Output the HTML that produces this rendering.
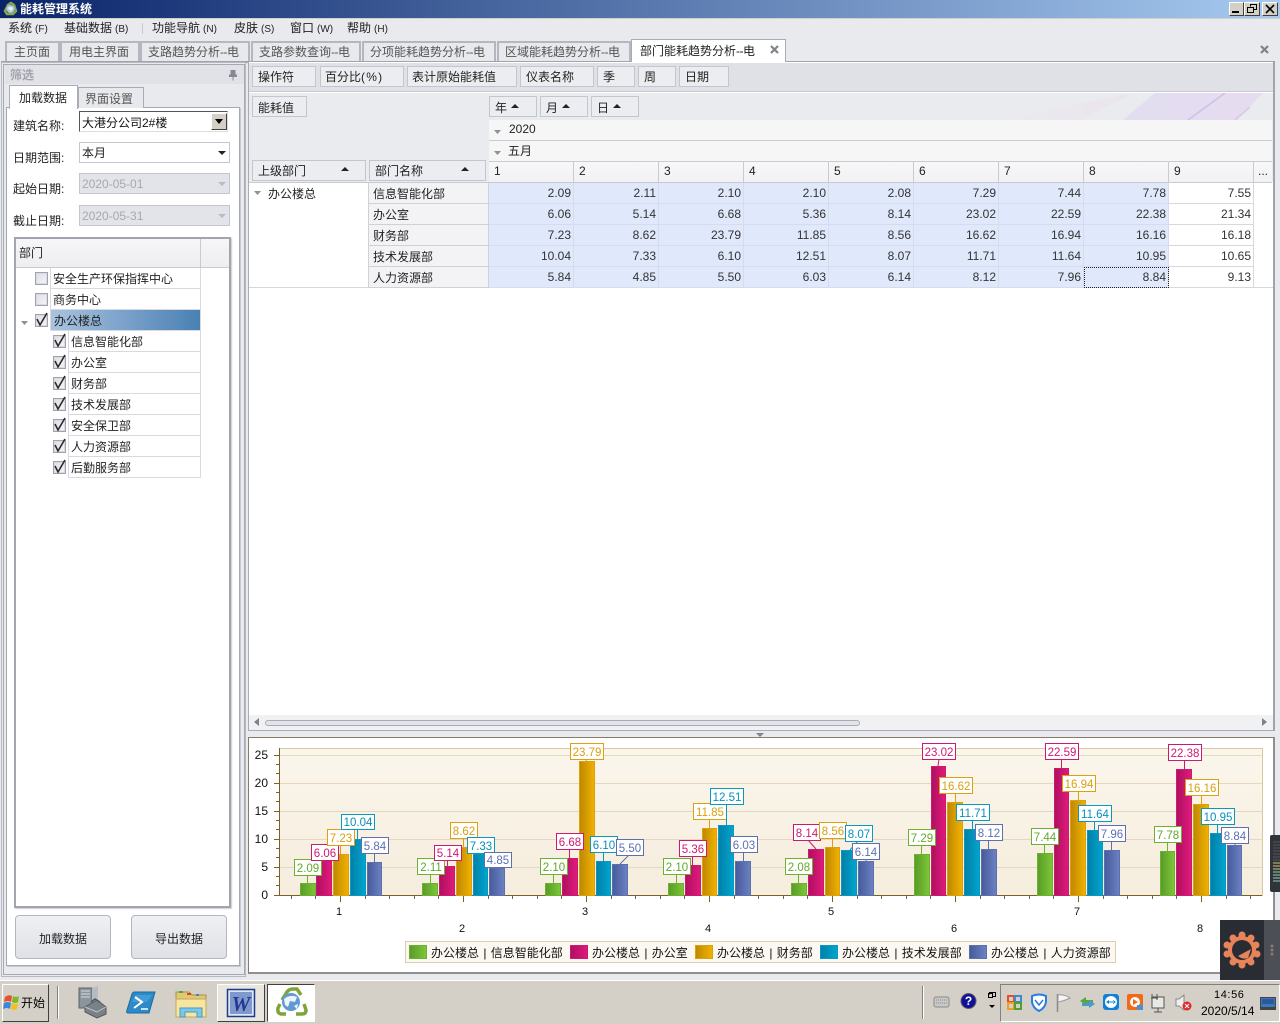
<!DOCTYPE html>
<html lang="zh"><head><meta charset="utf-8"><title>能耗管理系统</title>
<style>
html,body{margin:0;padding:0;width:1280px;height:1024px;overflow:hidden;background:#e9eaee}
body{font:12px/16px "Liberation Sans","WenQuanYi Zen Hei","Noto Sans CJK SC",sans-serif;color:#222;position:relative}
div{position:absolute;box-sizing:border-box}
.t{white-space:nowrap;height:16px}
.z{font-size:10px;margin-left:3px}
.tab{top:41px;height:21px;background:#e8e9ed;border:2px solid #b4b6c0;border-bottom:0;border-left-width:2px;color:#555;padding:1px 0 0 6px;white-space:nowrap}
.tab span{letter-spacing:-.5px}
.btn{background:#ecedf1;border:1px solid #c3c5cf;padding:2px 0 0 5px;white-space:nowrap;height:21px}
.nm{left:369px;width:120px;height:21px;background:#f3f3f5;border-bottom:1px solid #cfd0d8;border-right:1px solid #cfd0d8;padding:3px 0 0 4px;white-space:nowrap}
.c{height:21px;width:85px;background:#e0e8fb;border-bottom:1px solid #d5dcee;border-right:1px solid #d5dcee;text-align:right;padding:2px 2px 0 0;color:#333}
.w{background:#fff;border-bottom:1px solid #d8d9e0;border-right:1px solid #d8d9e0}
.h{top:162px;height:20px;width:85px;background:linear-gradient(#f7f7f8,#f2f2f4);border-right:1px solid #c9cad2;padding:1px 0 0 5px}
.lab{left:13px;color:#222}
.tr{background:#fff;border-bottom:1px solid #d8dae2;border-right:1px solid #d8dae2;border-left:1px solid #d8dae2;height:21px;padding:3px 0 0 2px;white-space:nowrap}
.ck{width:13px;height:13px;background:linear-gradient(135deg,#dcdde4,#f6f6f9);border:1px solid #a0a2ae;box-shadow:inset 0 0 0 1px #d9dae2}
svg text{font-family:"Liberation Sans","WenQuanYi Zen Hei",sans-serif}
.g rect{stroke:#6eb030}.g text{fill:#62a828}.g line{stroke:#6eb030}
.m rect{stroke:#cc1a70}.m text{fill:#cc1a70}.m line{stroke:#cc1a70}
.o rect{stroke:#dca010}.o text{fill:#d8a010}.o line{stroke:#dca010}
.b rect{stroke:#0898c0}.b text{fill:#0890b8}.b line{stroke:#0898c0}
.p rect{stroke:#5c70b0}.p text{fill:#5c70b0}.p line{stroke:#5c70b0}
.l rect{fill:#fff}.l text{font-size:11.5px;text-anchor:middle}
.bg rect{fill:url(#gg);stroke:#6eb030}.bm rect{fill:url(#gm);stroke:#cc1a70}.bo rect{fill:url(#go);stroke:#dca010}.bb rect{fill:url(#gb);stroke:#0898c0}.bp rect{fill:url(#gp);stroke:#5c70b0}
</style></head><body>

<div style="left:0;top:0;width:1280px;height:18px;background:linear-gradient(90deg,#0a246a,#a6caf0)"></div>
<div style="left:0;top:18px;width:1280px;height:1px;background:#d4d0c8"></div>
<div class="t" style="left:20px;top:1px;color:#fff;font-weight:bold">能耗管理系统</div>
<svg style="position:absolute;left:3px;top:1px" width="15" height="15" viewBox="0 0 15 15"><path d="M2 10L5 4 8 2 11 4 13 10 10 13H4Z" fill="none" stroke="#8aa84a" stroke-width="2.500"/><circle cx="7.500" cy="8" r="4" fill="#a8cbe8"/><path d="M5 7Q7 5 10 7L8 10Z" fill="#eef4fa"/></svg>
<div style="left:1229px;top:2px;width:15px;height:14px;background:#d4d0c8;border:1px solid;border-color:#fff #404040 #404040 #fff"></div>
<div style="left:1232px;top:11px;width:7px;height:2px;background:#000"></div>
<div style="left:1244px;top:2px;width:16px;height:14px;background:#d4d0c8;border:1px solid;border-color:#fff #404040 #404040 #fff"></div>
<svg style="position:absolute;left:1247px;top:4px" width="10" height="10"><path d="M3.500 2.500V.5H9.500V5.500H7M.5 3.500H6.500V8.500H.5Z" fill="none" stroke="#000"/></svg>
<div style="left:1262px;top:2px;width:16px;height:14px;background:#d4d0c8;border:1px solid;border-color:#fff #404040 #404040 #fff"></div>
<svg style="position:absolute;left:1265px;top:4px" width="10" height="10"><path d="M1 1L9 9M9 1L1 9" stroke="#000" stroke-width="1.600"/></svg>

<div class="t" style="left:8px;top:20px">系统<span class="z">(F)</span></div>
<div class="t" style="left:64px;top:20px">基础数据<span class="z">(B)</span></div>
<div style="left:142px;top:23px;width:1px;height:11px;background:#c8c9d2"></div>
<div class="t" style="left:152px;top:20px">功能导航<span class="z">(N)</span></div>
<div class="t" style="left:234px;top:20px">皮肤<span class="z">(S)</span></div>
<div class="t" style="left:290px;top:20px">窗口<span class="z">(W)</span></div>
<div class="t" style="left:347px;top:20px">帮助<span class="z">(H)</span></div>

<div class="tab" style="left:5px;width:55px;padding-left:7px">主页面</div>
<div class="tab" style="left:60px;width:80px;padding-left:7px">用电主界面</div>
<div class="tab" style="left:140px;width:110px">支路趋势分析<span>--</span>电</div>
<div class="tab" style="left:251px;width:110px">支路参数查询<span>--</span>电</div>
<div class="tab" style="left:362px;width:134px">分项能耗趋势分析<span>--</span>电</div>
<div class="tab" style="left:497px;width:134px">区域能耗趋势分析<span>--</span>电</div>
<div style="left:1px;top:61px;width:1274px;height:2px;background:#a0a2ad"></div>
<div class="tab" style="left:631px;top:39px;width:155px;height:24px;background:#fff;color:#222;padding:3px 0 0 8px;border-width:1px;border-bottom:0;border-color:#a9abb6">部门能耗趋势分析<span>--</span>电</div>
<svg style="position:absolute;left:769px;top:45px" width="11" height="9"><path d="M2 1L9 8M9 1L2 8" stroke="#7f818c" stroke-width="2.200"/></svg>
<svg style="position:absolute;left:1259px;top:45px" width="11" height="9"><path d="M2 1L9 8M9 1L2 8" stroke="#7f818c" stroke-width="2.200"/></svg>

<!-- left panel -->
<div style="left:1px;top:62px;width:245px;height:915px;border:1px solid #b7b9c3;background:#e9eaee"></div>
<div style="left:3px;top:64px;width:242px;height:911px;border:1px solid #a6a8b3;background:#e9eaee"></div>
<div style="left:5px;top:65px;width:239px;height:19px;background:#e1e2e7"></div>
<div class="t" style="left:10px;top:67px;color:#a2a4ae;font-weight:bold">筛选</div>
<svg style="position:absolute;left:229px;top:70px" width="8" height="11"><path d="M2 .5H6V5H7.500V6.500H.5V5H2ZM4 6.500V10.500" fill="#868894" stroke="#868894"/></svg>
<div style="left:6px;top:107px;width:234px;height:859px;background:#fff;border:1px solid #a6a8b3;box-shadow:1px 1px 0 #c7c8d0"></div>
<div style="left:78px;top:87px;width:66px;height:21px;background:#e8e9ed;border:1px solid #a9abb6;border-bottom:0;padding:3px 0 0 6px;color:#555">界面设置</div>
<div style="left:9px;top:85px;width:69px;height:24px;background:#fff;border:1px solid #a9abb6;border-bottom:0;padding:4px 0 0 9px">加载数据</div>

<div class="t lab" style="top:118px">建筑名称:</div>
<div class="t lab" style="top:150px">日期范围:</div>
<div class="t lab" style="top:181px">起始日期:</div>
<div class="t lab" style="top:213px">截止日期:</div>

<div style="left:79px;top:111px;width:149px;height:21px;background:#fff;border:1px solid;border-color:#555 #ddd #ddd #555;padding:3px 0 0 2px;color:#111">大港分公司2#楼</div>
<div style="left:211px;top:113px;width:16px;height:17px;background:#d4d0c8;border:1px solid;border-color:#fff #404040 #404040 #fff"></div>
<svg style="position:absolute;left:215px;top:119px" width="8" height="5"><path d="M0 0H8L4 5Z" fill="#000"/></svg>

<div style="left:79px;top:142px;width:151px;height:21px;background:#fff;border:1px solid #c3c5cf;padding:2px 0 0 2px">本月</div>
<svg style="position:absolute;left:218px;top:151px" width="8" height="4"><path d="M0 0H8L4 4Z" fill="#222"/></svg>
<div style="left:79px;top:173px;width:151px;height:21px;background:#e3e4e9;border:1px solid #c3c5cf;padding:2px 0 0 2px;color:#a6a8b2">2020-05-01</div>
<svg style="position:absolute;left:218px;top:182px" width="8" height="4"><path d="M0 0H8L4 4Z" fill="#b9bbc4"/></svg>
<div style="left:79px;top:205px;width:151px;height:21px;background:#e3e4e9;border:1px solid #c3c5cf;padding:2px 0 0 2px;color:#a6a8b2">2020-05-31</div>
<svg style="position:absolute;left:218px;top:214px" width="8" height="4"><path d="M0 0H8L4 4Z" fill="#b9bbc4"/></svg>

<!-- tree -->
<div style="left:14px;top:237px;width:217px;height:671px;background:#fff;border:2px solid #a2a4af;box-shadow:1px 1px 1px #ccc"></div>
<div style="left:16px;top:239px;width:213px;height:29px;background:linear-gradient(#f6f6f8,#eeeef1);border-bottom:1px solid #c9cad2;padding:6px 0 0 3px">部门</div>
<div style="left:200px;top:239px;width:1px;height:29px;background:#c9cad2"></div>
<div class="tr" style="left:50px;top:268px;width:151px">安全生产环保指挥中心</div>
<div class="tr" style="left:50px;top:289px;width:151px">商务中心</div>
<div class="tr" style="left:50px;top:310px;width:151px;background:linear-gradient(90deg,#a9c3de,#4a80b4);border-color:#d8dae2;padding-left:3px">办公楼总</div>
<div class="tr" style="left:68px;top:331px;width:133px">信息智能化部</div>
<div class="tr" style="left:68px;top:352px;width:133px">办公室</div>
<div class="tr" style="left:68px;top:373px;width:133px">财务部</div>
<div class="tr" style="left:68px;top:394px;width:133px">技术发展部</div>
<div class="tr" style="left:68px;top:415px;width:133px">安全保卫部</div>
<div class="tr" style="left:68px;top:436px;width:133px">人力资源部</div>
<div class="tr" style="left:68px;top:457px;width:133px">后勤服务部</div>
<div class="ck" style="left:35px;top:272px"></div>
<div class="ck" style="left:35px;top:293px"></div>
<div class="ck" style="left:35px;top:314px"></div>
<div class="ck" style="left:53px;top:335px"></div>
<div class="ck" style="left:53px;top:356px"></div>
<div class="ck" style="left:53px;top:377px"></div>
<div class="ck" style="left:53px;top:398px"></div>
<div class="ck" style="left:53px;top:419px"></div>
<div class="ck" style="left:53px;top:440px"></div>
<div class="ck" style="left:53px;top:461px"></div>
<svg style="position:absolute;left:0;top:0;pointer-events:none" width="80" height="480">
<path d="M21 321H28L24.500 325Z" fill="#8d8f9a"/>
<g fill="none" stroke="#2a2a2a" stroke-width="1.600">
<path d="M37 319L40 325 47 313"/><path d="M55 340L58 346 65 334"/><path d="M55 361L58 367 65 355"/><path d="M55 382L58 388 65 376"/><path d="M55 403L58 409 65 397"/><path d="M55 424L58 430 65 418"/><path d="M55 445L58 451 65 439"/><path d="M55 466L58 472 65 460"/>
</g></svg>

<div style="left:15px;top:915px;width:96px;height:44px;border:1px solid #b4b6c1;border-radius:4px;background:linear-gradient(#eff0f3,#dfe1e6);text-align:center;padding-top:15px">加载数据</div>
<div style="left:131px;top:915px;width:96px;height:44px;border:1px solid #b4b6c1;border-radius:4px;background:linear-gradient(#eff0f3,#dfe1e6);text-align:center;padding-top:15px">导出数据</div>

<!-- right: pivot -->
<div style="left:248px;top:62px;width:1027px;height:669px;background:#fff;border-left:1px solid #a9abb6;border-right:2px solid #a0a2ad;border-bottom:1px solid #a9abb6"></div>
<div style="left:249px;top:63px;width:1024px;height:29px;background:#e0e1e6;border-bottom:1px solid #c8c9d2"></div>
<div style="left:249px;top:93px;width:1024px;height:89px;background:#eaebef"></div>
<svg style="position:absolute;left:1000px;top:93px" width="273" height="27"><defs><linearGradient id="pf" x1="0" x2="1" y1="0" y2="0"><stop offset="0" stop-color="#eaebef"/><stop offset="1" stop-color="#ebe4ec"/></linearGradient><linearGradient id="pl" x1="0" x2="1" y1="0" y2="0"><stop offset="0" stop-color="#e2ddf0"/><stop offset="1" stop-color="#e6dcf0"/></linearGradient></defs><path d="M5 27L120 2H130L80 27Z" fill="url(#pf)"/><path d="M123 27L155 0H263L237 27Z" fill="url(#pl)"/><path d="M188 27L225 0" stroke="#cfc0e6" stroke-width="1.500" fill="none"/><path d="M235 27L250 14" stroke="#d6c8ea" stroke-width="1.500" fill="none"/></svg>
<div class="btn" style="left:252px;top:66px;width:64px">操作符</div>
<div class="btn" style="left:320px;top:66px;width:84px;padding-left:4px">百分比<span style="letter-spacing:1.200px">(%)</span></div>
<div class="btn" style="left:407px;top:66px;width:110px;padding-left:4px">表计原始能耗值</div>
<div class="btn" style="left:520px;top:66px;width:74px">仪表名称</div>
<div class="btn" style="left:597px;top:66px;width:38px">季</div>
<div class="btn" style="left:638px;top:66px;width:38px">周</div>
<div class="btn" style="left:679px;top:66px;width:50px">日期</div>
<div class="btn" style="left:252px;top:96px;width:55px;padding-top:3px">能耗值</div>
<div class="btn" style="left:489px;top:96px;width:48px;padding-top:3px">年</div><svg style="position:absolute;left:511px;top:104px" width="8" height="4"><path d="M4 0L8 4H0Z" fill="#222"/></svg>
<div class="btn" style="left:540px;top:96px;width:48px;padding-top:3px">月</div><svg style="position:absolute;left:562px;top:104px" width="8" height="4"><path d="M4 0L8 4H0Z" fill="#222"/></svg>
<div class="btn" style="left:591px;top:96px;width:48px;padding-top:3px">日</div><svg style="position:absolute;left:613px;top:104px" width="8" height="4"><path d="M4 0L8 4H0Z" fill="#222"/></svg>
<div class="btn" style="left:252px;top:160px;width:114px">上级部门</div><svg style="position:absolute;left:341px;top:167px" width="8" height="4"><path d="M4 0L8 4H0Z" fill="#222"/></svg>
<div class="btn" style="left:369px;top:160px;width:117px">部门名称</div><svg style="position:absolute;left:461px;top:167px" width="8" height="4"><path d="M4 0L8 4H0Z" fill="#222"/></svg>

<div style="left:489px;top:120px;width:783px;height:21px;background:#f6f6f7;border-bottom:1px solid #c9cad2;padding:1px 0 0 20px">2020</div>
<div style="left:489px;top:141px;width:783px;height:21px;background:#f6f6f7;border-bottom:1px solid #c9cad2;padding:2px 0 0 19px">五月</div>
<svg style="position:absolute;left:490px;top:128px" width="16" height="28"><path d="M4 2H11L7.500 6ZM4 23H11L7.500 27Z" fill="#8d8f9a"/></svg>
<div style="left:489px;top:182px;width:783px;height:1px;background:#c9cad2"></div>
<div style="left:249px;top:182px;width:240px;height:1px;background:#c9cad2"></div>
<div class="h" style="left:489px;width:85px">1</div><div class="h" style="left:574px">2</div><div class="h" style="left:659px">3</div><div class="h" style="left:744px">4</div><div class="h" style="left:829px">5</div><div class="h" style="left:914px">6</div><div class="h" style="left:999px">7</div><div class="h" style="left:1084px">8</div><div class="h" style="left:1169px">9</div>
<div class="h" style="left:1254px;width:18px;padding-left:4px;border-right:0">...</div>

<svg style="position:absolute;left:253px;top:190px" width="10" height="6"><path d="M1 1H8L4.500 5Z" fill="#8d8f9a"/></svg>
<div class="t" style="left:268px;top:186px">办公楼总</div>
<div style="left:249px;top:287px;width:1024px;height:1px;background:#d5d6de"></div>
<div style="left:368px;top:183px;width:1px;height:105px;background:#cfd0d8"></div>

<div class="nm" style="top:183px">信息智能化部</div><div class="nm" style="top:204px">办公室</div><div class="nm" style="top:225px">财务部</div><div class="nm" style="top:246px">技术发展部</div><div class="nm" style="top:267px">人力资源部</div>

<div class="c" style="left:489px;top:183px">2.09</div><div class="c" style="left:574px;top:183px">2.11</div><div class="c" style="left:659px;top:183px">2.10</div><div class="c" style="left:744px;top:183px">2.10</div><div class="c" style="left:829px;top:183px">2.08</div><div class="c" style="left:914px;top:183px">7.29</div><div class="c" style="left:999px;top:183px">7.44</div><div class="c" style="left:1084px;top:183px">7.78</div><div class="c w" style="left:1169px;top:183px">7.55</div>
<div class="c" style="left:489px;top:204px">6.06</div><div class="c" style="left:574px;top:204px">5.14</div><div class="c" style="left:659px;top:204px">6.68</div><div class="c" style="left:744px;top:204px">5.36</div><div class="c" style="left:829px;top:204px">8.14</div><div class="c" style="left:914px;top:204px">23.02</div><div class="c" style="left:999px;top:204px">22.59</div><div class="c" style="left:1084px;top:204px">22.38</div><div class="c w" style="left:1169px;top:204px">21.34</div>
<div class="c" style="left:489px;top:225px">7.23</div><div class="c" style="left:574px;top:225px">8.62</div><div class="c" style="left:659px;top:225px">23.79</div><div class="c" style="left:744px;top:225px">11.85</div><div class="c" style="left:829px;top:225px">8.56</div><div class="c" style="left:914px;top:225px">16.62</div><div class="c" style="left:999px;top:225px">16.94</div><div class="c" style="left:1084px;top:225px">16.16</div><div class="c w" style="left:1169px;top:225px">16.18</div>
<div class="c" style="left:489px;top:246px">10.04</div><div class="c" style="left:574px;top:246px">7.33</div><div class="c" style="left:659px;top:246px">6.10</div><div class="c" style="left:744px;top:246px">12.51</div><div class="c" style="left:829px;top:246px">8.07</div><div class="c" style="left:914px;top:246px">11.71</div><div class="c" style="left:999px;top:246px">11.64</div><div class="c" style="left:1084px;top:246px">10.95</div><div class="c w" style="left:1169px;top:246px">10.65</div>
<div class="c" style="left:489px;top:267px">5.84</div><div class="c" style="left:574px;top:267px">4.85</div><div class="c" style="left:659px;top:267px">5.50</div><div class="c" style="left:744px;top:267px">6.03</div><div class="c" style="left:829px;top:267px">6.14</div><div class="c" style="left:914px;top:267px">8.12</div><div class="c" style="left:999px;top:267px">7.96</div><div class="c" style="left:1084px;top:267px;outline:1px dotted #222;outline-offset:-1px">8.84</div><div class="c w" style="left:1169px;top:267px">9.13</div>

<!-- scrollbar -->
<div style="left:249px;top:715px;width:1024px;height:15px;background:#f1f1f4"></div>
<svg style="position:absolute;left:254px;top:718px" width="6" height="8"><path d="M5 0V8L0 4Z" fill="#7f818c"/></svg>
<svg style="position:absolute;left:1262px;top:718px" width="6" height="8"><path d="M0 0V8L5 4Z" fill="#7f818c"/></svg>
<div style="left:265px;top:720px;width:595px;height:6px;border-radius:3px;background:#e3e4e9;border:1px solid #a9abb6"></div>
<svg style="position:absolute;left:756px;top:733px" width="8" height="4"><path d="M0 0H8L4 4Z" fill="#7f818c"/></svg>

<!-- chart panel -->
<div style="left:248px;top:737px;width:1027px;height:237px;background:#fff;border:1px solid #8a7a68;border-right:2px solid #8f8f92;border-bottom:2px solid #8f8f92"></div>

<svg style="position:absolute;left:0;top:0" width="1280" height="1024">
<defs>
<linearGradient id="bgp" x1="0" y1="0" x2="0" y2="1"><stop offset="0" stop-color="#fbf6ec"/><stop offset="1" stop-color="#f5eddd"/></linearGradient>
<linearGradient id="gg"><stop offset="0" stop-color="#5a9a28"/><stop offset="1" stop-color="#7cc838"/></linearGradient>
<linearGradient id="gm"><stop offset="0" stop-color="#ae1060"/><stop offset="1" stop-color="#e01a7c"/></linearGradient>
<linearGradient id="go"><stop offset="0" stop-color="#bd8800"/><stop offset="1" stop-color="#f2b200"/></linearGradient>
<linearGradient id="gb"><stop offset="0" stop-color="#007fa8"/><stop offset="1" stop-color="#00a6cf"/></linearGradient>
<linearGradient id="gp"><stop offset="0" stop-color="#465a9c"/><stop offset="1" stop-color="#6c82c2"/></linearGradient>
</defs>
<rect x="279.500" y="748.500" width="983" height="147" fill="url(#bgp)" stroke="#d8c9a0"/>
<g stroke="#e4d9bf"><path d="M280 755.500H1262M280 783.500H1262M280 811.500H1262M280 839.500H1262M280 867.500H1262"/></g>
<g stroke="#7d5f28" fill="none">
<path d="M279.500 748V896M275 895.500H1262"/>
<path d="M274 755.500H280M274 783.500H280M274 811.500H280M274 839.500H280M274 867.500H280M274 895.500H280"/>
<path d="M276 764.500H280M276 773.500H280M276 792.500H280M276 801.500H280M276 820.500H280M276 829.500H280M276 848.500H280M276 857.500H280M276 876.500H280M276 885.500H280"/>
<path d="M340.500 895V902M463.500 895V902M586.500 895V902M709.500 895V902M832.500 895V902M955.500 895V902M1078.500 895V902M1201.500 895V902"/>
<path d="M291.500 895V899M315.500 895V899M365.500 895V899M389.500 895V899M414.500 895V899M438.500 895V899M488.500 895V899M512.500 895V899M537.500 895V899M561.500 895V899M611.500 895V899M635.500 895V899M660.500 895V899M684.500 895V899M734.500 895V899M758.500 895V899M783.500 895V899M807.500 895V899M857.500 895V899M881.500 895V899M906.500 895V899M930.500 895V899M980.500 895V899M1004.500 895V899M1029.500 895V899M1053.500 895V899M1103.500 895V899M1127.500 895V899M1152.500 895V899M1176.500 895V899M1226.500 895V899M1250.500 895V899"/>
</g>
<g font-size="12" fill="#111" text-anchor="end">
<text x="268" y="759">25</text><text x="268" y="787">20</text><text x="268" y="815">15</text><text x="268" y="843">10</text><text x="268" y="871">5</text><text x="268" y="899">0</text>
</g>
<g font-size="11" fill="#111" text-anchor="middle">
<text x="339" y="915">1</text><text x="462" y="932">2</text><text x="585" y="915">3</text><text x="708" y="932">4</text><text x="831" y="915">5</text><text x="954" y="932">6</text><text x="1077" y="915">7</text><text x="1200" y="932">8</text>
</g>

<g class="bg">
<rect x="300.500" y="883.500" width="15" height="12"/><rect x="422.500" y="883.500" width="15" height="12"/><rect x="545.500" y="883.500" width="15" height="12"/><rect x="668.500" y="883.500" width="15" height="12"/><rect x="791.500" y="883.500" width="15" height="12"/><rect x="914.500" y="854.500" width="15" height="41"/><rect x="1037.500" y="853.500" width="15" height="42"/><rect x="1160.500" y="851.500" width="14" height="44"/>
</g>
<g class="bm">
<rect x="316.500" y="861.500" width="15" height="34"/><rect x="439.500" y="866.500" width="15" height="29"/><rect x="562.500" y="858.500" width="15" height="37"/><rect x="685.500" y="865.500" width="15" height="30"/><rect x="808.500" y="849.500" width="15" height="46"/><rect x="931.500" y="766.500" width="14" height="129"/><rect x="1054.500" y="768.500" width="14" height="127"/><rect x="1176.500" y="769.500" width="15" height="126"/>
</g>
<g class="bo">
<rect x="333.500" y="854.500" width="15" height="41"/><rect x="456.500" y="847.500" width="15" height="48"/><rect x="579.500" y="761.500" width="15" height="134"/><rect x="702.500" y="828.500" width="14" height="67"/><rect x="825.500" y="847.500" width="14" height="48"/><rect x="947.500" y="802.500" width="15" height="93"/><rect x="1070.500" y="800.500" width="15" height="95"/><rect x="1193.500" y="804.500" width="15" height="91"/>
</g>
<g class="bb">
<rect x="350.500" y="839.500" width="15" height="56"/><rect x="473.500" y="854.500" width="14" height="41"/><rect x="596.500" y="861.500" width="14" height="34"/><rect x="718.500" y="825.500" width="15" height="70"/><rect x="841.500" y="850.500" width="15" height="45"/><rect x="964.500" y="829.500" width="15" height="66"/><rect x="1087.500" y="830.500" width="15" height="65"/><rect x="1210.500" y="833.500" width="15" height="62"/>
</g>
<g class="bp">
<rect x="367.500" y="862.500" width="14" height="33"/><rect x="489.500" y="868.500" width="15" height="27"/><rect x="612.500" y="864.500" width="15" height="31"/><rect x="735.500" y="861.500" width="15" height="34"/><rect x="858.500" y="861.500" width="15" height="34"/><rect x="981.500" y="849.500" width="15" height="46"/><rect x="1104.500" y="850.500" width="15" height="45"/><rect x="1227.500" y="845.500" width="14" height="50"/>
</g>

<g class="l">
<g class="g"><line x1="307.500" y1="875" x2="307.500" y2="883"/><rect x="294.500" y="859.500" width="27" height="16"/><text x="308" y="872">2.09</text></g>
<g class="m"><line x1="324.500" y1="860" x2="324.500" y2="861"/><rect x="311.500" y="844.500" width="27" height="16"/><text x="325" y="857">6.06</text></g>
<g class="o"><line x1="340.500" y1="845" x2="340.500" y2="854"/><rect x="327.500" y="829.500" width="27" height="16"/><text x="341" y="842">7.23</text></g>
<g class="b"><line x1="357.500" y1="830" x2="357.500" y2="839"/><rect x="341.500" y="814.500" width="33" height="15"/><text x="358" y="826">10.04</text></g>
<g class="p"><line x1="374.500" y1="853" x2="374.500" y2="862"/><rect x="361.500" y="837.500" width="27" height="16"/><text x="375" y="850">5.84</text></g>

<g class="g"><line x1="430.500" y1="874" x2="430.500" y2="883"/><rect x="417.500" y="858.500" width="27" height="16"/><text x="431" y="871">2.11</text></g>
<g class="m"><line x1="447.500" y1="860" x2="447.500" y2="866"/><rect x="434.500" y="845.500" width="27" height="15"/><text x="448" y="857">5.14</text></g>
<g class="o"><line x1="463.500" y1="838" x2="463.500" y2="847"/><rect x="450.500" y="822.500" width="27" height="16"/><text x="464" y="835">8.62</text></g>
<g class="b"><line x1="480.500" y1="853" x2="480.500" y2="854"/><rect x="467.500" y="837.500" width="27" height="16"/><text x="481" y="850">7.33</text></g>
<g class="p"><line x1="497.500" y1="867" x2="497.500" y2="868"/><rect x="484.500" y="852.500" width="27" height="15"/><text x="498" y="864">4.85</text></g>

<g class="g"><line x1="553.500" y1="874" x2="553.500" y2="883"/><rect x="540.500" y="858.500" width="27" height="16"/><text x="554" y="871">2.10</text></g>
<g class="m"><line x1="569.500" y1="849" x2="569.500" y2="858"/><rect x="556.500" y="833.500" width="27" height="16"/><text x="570" y="846">6.68</text></g>
<g class="o"><line x1="587" y1="759" x2="586" y2="761"/><rect x="570.500" y="743.500" width="33" height="16"/><text x="587" y="756">23.79</text></g>
<g class="b"><line x1="603.500" y1="852" x2="603.500" y2="861"/><rect x="590.500" y="836.500" width="27" height="16"/><text x="604" y="849">6.10</text></g>
<g class="p"><line x1="629" y1="855" x2="620" y2="864"/><rect x="616.500" y="839.500" width="27" height="16"/><text x="630" y="852">5.50</text></g>

<g class="g"><line x1="676.500" y1="874" x2="676.500" y2="883"/><rect x="663.500" y="858.500" width="27" height="16"/><text x="677" y="871">2.10</text></g>
<g class="m"><line x1="692.500" y1="856" x2="692.500" y2="865"/><rect x="679.500" y="840.500" width="27" height="16"/><text x="693" y="853">5.36</text></g>
<g class="o"><line x1="709.500" y1="819" x2="709.500" y2="828"/><rect x="693.500" y="803.500" width="33" height="16"/><text x="710" y="816">11.85</text></g>
<g class="b"><line x1="726.500" y1="804" x2="726.500" y2="825"/><rect x="710.500" y="788.500" width="33" height="16"/><text x="727" y="801">12.51</text></g>
<g class="p"><line x1="743.500" y1="852" x2="743.500" y2="861"/><rect x="730.500" y="836.500" width="27" height="16"/><text x="744" y="849">6.03</text></g>

<g class="g"><line x1="798.500" y1="874" x2="798.500" y2="883"/><rect x="785.500" y="858.500" width="27" height="16"/><text x="799" y="871">2.08</text></g>
<g class="m"><line x1="808" y1="840" x2="816" y2="849"/><rect x="793.500" y="824.500" width="27" height="16"/><text x="807" y="837">8.14</text></g>
<g class="o"><line x1="832.500" y1="838" x2="832.500" y2="847"/><rect x="819.500" y="822.500" width="27" height="16"/><text x="833" y="835">8.56</text></g>
<g class="b"><line x1="858" y1="841" x2="850" y2="850"/><rect x="845.500" y="825.500" width="27" height="16"/><text x="859" y="838">8.07</text></g>
<g class="p"><line x1="866" y1="859" x2="866" y2="861"/><rect x="852.500" y="843.500" width="27" height="16"/><text x="866" y="856">6.14</text></g>

<g class="g"><line x1="921.500" y1="845" x2="921.500" y2="854"/><rect x="908.500" y="829.500" width="27" height="16"/><text x="922" y="842">7.29</text></g>
<g class="m"><line x1="939" y1="759" x2="938" y2="766"/><rect x="922.500" y="743.500" width="33" height="16"/><text x="939" y="756">23.02</text></g>
<g class="o"><line x1="955.500" y1="793" x2="955.500" y2="802"/><rect x="939.500" y="777.500" width="33" height="16"/><text x="956" y="790">16.62</text></g>
<g class="b"><line x1="972.500" y1="820" x2="972.500" y2="829"/><rect x="956.500" y="804.500" width="33" height="16"/><text x="973" y="817">11.71</text></g>
<g class="p"><line x1="988.500" y1="840" x2="988.500" y2="849"/><rect x="975.500" y="824.500" width="27" height="16"/><text x="989" y="837">8.12</text></g>

<g class="g"><line x1="1044.500" y1="844" x2="1044.500" y2="853"/><rect x="1031.500" y="828.500" width="27" height="16"/><text x="1045" y="841">7.44</text></g>
<g class="m"><line x1="1061.500" y1="759" x2="1061.500" y2="768"/><rect x="1045.500" y="743.500" width="33" height="16"/><text x="1062" y="756">22.59</text></g>
<g class="o"><line x1="1078.500" y1="791" x2="1078.500" y2="800"/><rect x="1062.500" y="775.500" width="33" height="16"/><text x="1079" y="788">16.94</text></g>
<g class="b"><line x1="1094.500" y1="821" x2="1094.500" y2="830"/><rect x="1078.500" y="805.500" width="33" height="16"/><text x="1095" y="818">11.64</text></g>
<g class="p"><line x1="1111.500" y1="841" x2="1111.500" y2="850"/><rect x="1098.500" y="825.500" width="27" height="16"/><text x="1112" y="838">7.96</text></g>

<g class="g"><line x1="1167.500" y1="842" x2="1167.500" y2="851"/><rect x="1154.500" y="826.500" width="27" height="16"/><text x="1168" y="839">7.78</text></g>
<g class="m"><line x1="1184.500" y1="760" x2="1184.500" y2="769"/><rect x="1168.500" y="744.500" width="33" height="16"/><text x="1185" y="757">22.38</text></g>
<g class="o"><line x1="1201.500" y1="795" x2="1201.500" y2="804"/><rect x="1185.500" y="779.500" width="33" height="16"/><text x="1202" y="792">16.16</text></g>
<g class="b"><line x1="1217.500" y1="824" x2="1217.500" y2="833"/><rect x="1201.500" y="808.500" width="33" height="16"/><text x="1218" y="821">10.95</text></g>
<g class="p"><line x1="1235" y1="843" x2="1235" y2="845"/><rect x="1221.500" y="827.500" width="27" height="16"/><text x="1235" y="840">8.84</text></g>
</g>

<!-- legend -->
<rect x="405.500" y="941.500" width="710" height="21" fill="#fbf8f1" stroke="#dccfae"/>
<rect x="409.500" y="945.500" width="17" height="13" fill="url(#gg)" stroke="#6eb030"/>
<rect x="570.500" y="945.500" width="17" height="13" fill="url(#gm)" stroke="#cc1a70"/>
<rect x="695.500" y="945.500" width="17" height="13" fill="url(#go)" stroke="#dca010"/>
<rect x="820.500" y="945.500" width="17" height="13" fill="url(#gb)" stroke="#0898c0"/>
<rect x="969.500" y="945.500" width="17" height="13" fill="url(#gp)" stroke="#5c70b0"/>
<g font-size="12" fill="#111" word-spacing="1">
<text x="431" y="957">办公楼总 | 信息智能化部</text>
<text x="592" y="957">办公楼总 | 办公室</text>
<text x="717" y="957">办公楼总 | 财务部</text>
<text x="842" y="957">办公楼总 | 技术发展部</text>
<text x="991" y="957">办公楼总 | 人力资源部</text>
</g>
</svg>

<!-- taskbar -->
<div style="left:0;top:980px;width:1280px;height:44px;background:#d4d0c8;border-top:1px solid #fff"></div>
<div style="left:2px;top:984px;width:47px;height:38px;background:#d4d0c8;border:1px solid;border-color:#fff #404040 #404040 #fff;padding:10px 0 0 18px;color:#000;white-space:nowrap">开始</div>
<div style="left:57px;top:986px;width:2px;height:33px;background:#fff;border-left:1px solid #808080"></div>
<div style="left:217px;top:984px;width:48px;height:38px;background:#e9e6df;border:1px solid;border-color:#fff #404040 #404040 #fff"></div>
<div style="left:267px;top:984px;width:48px;height:38px;background:#fff;border:1px solid;border-color:#404040 #fff #fff #404040"></div>
<div style="left:922px;top:986px;width:2px;height:33px;background:#fff;border-left:1px solid #808080"></div>
<div style="left:1000px;top:984px;width:280px;height:38px;border:1px solid;border-color:#808080 #fff #fff #808080"></div>
<div class="t" style="left:1214px;top:987px;color:#000;letter-spacing:.6px;font-size:11px">14:56</div>
<div class="t" style="left:1201px;top:1003px;color:#000;font-size:12px">2020/5/14</div>

<svg style="position:absolute;left:0;top:980px" width="1280" height="44">
<!-- start flag -->
<path d="M5 17Q9 14 12 16L11 22Q8 20 4 22Z" fill="#e8502a"/><path d="M13 16Q16 18 19 16L18 22Q15 24 12 22Z" fill="#7cb82a"/><path d="M4 23Q8 21 11 23L10 29Q7 27 3 29Z" fill="#3a88d8"/><path d="M12 23Q15 25 18 23L17 29Q14 31 11 29Z" fill="#f2c020"/>
<!-- server + toolbox -->
<path d="M79 8H92V28H79Z" fill="#8c949c" stroke="#5a626a"/><path d="M92 8L98 6V22L92 26Z" fill="#b4bcc4"/><path d="M81 11H90M81 14H90M81 17H90" stroke="#d8dce0"/>
<path d="M85 27L97 20 106 27V34L97 38 85 32Z" fill="#7a8288" stroke="#50585e"/><path d="M85 27L97 32 106 27" stroke="#c0c6ca" fill="none"/><path d="M91 22L95 19 100 22" fill="none" stroke="#50585e" stroke-width="1.500"/>
<!-- powershell -->
<path d="M134 12H155L149 33H128Q126 33 127 30L132 14Q133 12 134 12Z" fill="#2d8ac8" stroke="#1a6aa0"/><path d="M136 15H152L147 22H132Z" fill="#5ab0e0" opacity=".5"/><path d="M135 17L142 22 134 28" fill="none" stroke="#fff" stroke-width="2"/><path d="M141 29H148" stroke="#fff" stroke-width="1.500"/>
<!-- folder -->
<path d="M176 12H189L192 15H206V37H176Z" fill="#e3c870" stroke="#a89050"/><path d="M176 19H206V37H176Z" fill="#f6e6a0" stroke="#c4a860"/><rect x="179" y="11" width="4" height="2" fill="#3cb040"/><rect x="187" y="13" width="4" height="2" fill="#d04830"/><rect x="196" y="14" width="3" height="2" fill="#3888d0"/><path d="M180 37V28H202V37H197V32H185V37Z" fill="#7cc8e8" stroke="#4898c0"/>
<!-- word -->
<rect x="227.500" y="9.500" width="27" height="27" fill="#dfe6f4" stroke="#1a3c90" stroke-width="1.500"/><rect x="230" y="12" width="22" height="22" fill="#8098cc"/><text x="241" y="31" font-size="21" font-weight="bold" font-style="italic" text-anchor="middle" fill="#1e3a94" style="font-family:'Liberation Serif',serif">W</text>
<!-- recycle -->
<g fill="none" stroke="#7fa53a" stroke-width="3.500"><path d="M282 20L287 12Q289 9 293 9H297L301 15"/><path d="M304 24L306 30Q306 34 302 34H296"/><path d="M286 34H281Q277 33 278 28L280 24"/></g>
<circle cx="291" cy="22" r="9" fill="#5f9ad4"/><path d="M284 19Q290 14 297 17L295 22 290 21 288 27 285 25Z" fill="#eef3f9"/><path d="M294 26L298 24 297 29Z" fill="#eef3f9"/>
<!-- tray: keyboard, help, restore -->
<rect x="934" y="17" width="15" height="10" rx="2" fill="#c8c8c8" stroke="#8a8a8a"/><path d="M936 20H947M936 23H947" stroke="#8a8a8a" stroke-dasharray="1 1"/>
<circle cx="968.500" cy="21" r="7.500" fill="#10109a" stroke="#606060"/><text x="968.500" y="25" font-size="12" font-weight="bold" fill="#fff" text-anchor="middle">?</text>
<path d="M989.500 14.500V12.500H995.500V16.500H993M988.500 13.500H992.500V17.500H988.500Z" fill="none" stroke="#000"/><path d="M989 25H995L992 28Z" fill="#000"/>
<!-- tray colored -->
<rect x="1008" y="16" width="6" height="6" fill="none" stroke="#e05030" stroke-width="2"/><rect x="1015" y="16" width="6" height="6" fill="none" stroke="#4088d0" stroke-width="2"/><rect x="1008" y="23" width="6" height="6" fill="none" stroke="#f0a020" stroke-width="2"/><rect x="1015" y="23" width="6" height="6" fill="none" stroke="#50a030" stroke-width="2"/>
<path d="M1032 16Q1039 13 1046 16V22Q1045 28 1039 31 1033 28 1032 22Z" fill="#fff" stroke="#2a7ae0" stroke-width="2"/><path d="M1035 20L1039 25 1043 20" fill="none" stroke="#2a7ae0" stroke-width="1.500"/>
<path d="M1057.500 14V32" stroke="#888" stroke-width="1.500"/><path d="M1058 15Q1064 14 1070 18 1064 21 1058 22Z" fill="#f4f4f4" stroke="#999"/>
<path d="M1080 21L1086 17V20H1093V23H1086V25Z" fill="#58a838"/><path d="M1095 24L1089 20V23H1082V26H1089V28Z" fill="#4a9ad0"/>
<rect x="1103" y="14" width="16" height="16" rx="3" fill="#0e80d8"/><circle cx="1111" cy="22" r="6" fill="#fff"/><path d="M1106 22L1109 20V24ZM1116 22L1113 20V24ZM1108 21.500H1114V22.500H1108Z" fill="#0e80d8"/>
<rect x="1127" y="14" width="16" height="16" rx="2" fill="#f06a18"/><circle cx="1135" cy="22" r="5" fill="#fff"/><path d="M1133 19L1138 22 1133 25Z" fill="#f06a18"/><rect x="1137" y="25" width="6" height="5" fill="#4a90d8"/>
<rect x="1152" y="17" width="12" height="11" fill="#e8e8e4" stroke="#555"/><path d="M1152 14V20M1157 14V20M1151 18H1158" stroke="#555"/><path d="M1158 28V32M1154 32H1162" stroke="#555"/>
<path d="M1176 19H1179L1184 15V30L1179 26H1176Z" fill="#eee" stroke="#888"/><circle cx="1187" cy="26" r="4.500" fill="#e02828"/><path d="M1185 24L1189 28M1189 24L1185 28" stroke="#fff"/>
<rect x="1260.500" y="17.500" width="15" height="12" fill="#3a78c0" stroke="#444"/><rect x="1262" y="19" width="12" height="5" fill="#2a5a9c"/><rect x="1260" y="27" width="16" height="3" fill="#444"/>
</svg>

<!-- floating widgets -->
<div style="left:1270px;top:835px;width:10px;height:57px;background:#2f343a;border-radius:2px 0 0 2px"></div>
<svg style="position:absolute;left:1273px;top:840px" width="7" height="48"><path d="M0 2H7M0 5H7M0 8H7M0 11H7M0 14H7M0 17H7M0 20H7" stroke="#555"/><path d="M0 23H7M0 26H7M0 29H7" stroke="#cfc56a"/><path d="M0 32H7M0 35H7M0 38H7M0 41H7" stroke="#8ed0b0"/></svg>
<div style="left:1220px;top:920px;width:60px;height:60px;background:#2a2c34"></div>
<div style="left:1264px;top:920px;width:16px;height:60px;background:#4d4f57"></div>
<svg style="position:absolute;left:1220px;top:920px" width="60" height="60">
<g fill="#e8845a"><circle cx="22" cy="15" r="3.500"/><circle cx="31" cy="18" r="3.500"/><circle cx="36" cy="25" r="3.500"/><circle cx="37" cy="34" r="3.500"/><circle cx="31" cy="42" r="3.500"/><circle cx="22" cy="45" r="3.500"/><circle cx="13" cy="42" r="3.500"/><circle cx="7" cy="34" r="3.500"/><circle cx="7" cy="25" r="3.500"/><circle cx="13" cy="18" r="3.500"/><circle cx="22" cy="30" r="14"/></g>
<circle cx="22" cy="30" r="10" fill="#2a2c34"/>
<path d="M18 36L31 29 28 38Q23 40 18 36Z" fill="#e8845a"/>
<circle cx="52" cy="26" r="1.500" fill="#8a7a72"/><circle cx="52" cy="30" r="1.500" fill="#8a7a72"/><circle cx="52" cy="34" r="1.500" fill="#8a7a72"/>
</svg>
</body></html>
